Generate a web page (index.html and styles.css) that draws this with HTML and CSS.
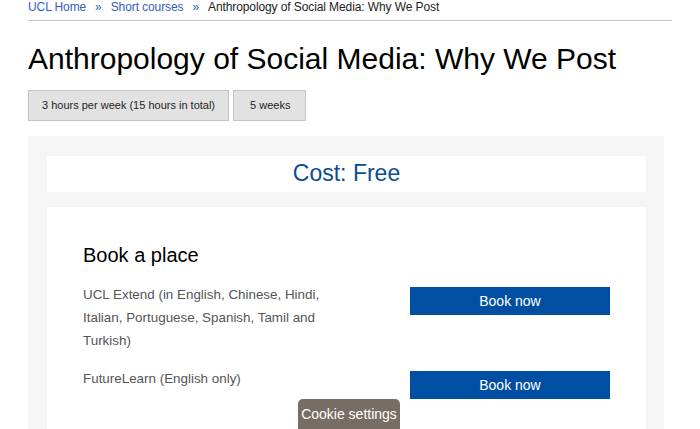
FILE: index.html
```html
<!DOCTYPE html>
<html lang="en">
<head>
<meta charset="utf-8">
<title>Anthropology of Social Media: Why We Post</title>
<link rel="stylesheet" href="styles.css">
</head>
<body>
<div class="page">
  <nav class="breadcrumb">
    <a href="#">UCL Home</a><span class="sep">»</span><a href="#">Short courses</a><span class="sep">»</span><span class="current">Anthropology of Social Media: Why We Post</span>
  </nav>
  <h1 class="title">Anthropology of Social Media: Why We Post</h1>
  <div class="tags">
    <span class="tag">3 hours per week (15 hours in total)</span>
    <span class="tag">5 weeks</span>
  </div>
  <section class="panel">
    <div class="cost">Cost: Free</div>
    <div class="card">
      <h2 class="card-title">Book a place</h2>
      <div class="row">
        <p class="row-text">UCL Extend (in English, Chinese, Hindi, Italian, Portuguese, Spanish, Tamil and Turkish)</p>
        <a class="btn" href="#">Book now</a>
      </div>
      <div class="row">
        <p class="row-text">FutureLearn (English only)</p>
        <a class="btn" href="#">Book now</a>
      </div>
    </div>
  </section>
</div>
<button class="cookie">Cookie settings</button>
</body>
</html>
```
FILE: styles.css
```css
html, body {
  margin: 0;
  padding: 0;
  background: #fff;
  font-family: "Liberation Sans", Arial, sans-serif;
  color: #000;
  overflow: hidden;
}
.page {
  padding: 0 28px;
}
.breadcrumb {
  font-size: 12px;
  line-height: 14px;
  padding-bottom: 6px;
  border-bottom: 1px solid #c8c8c8;
  color: #222;
  letter-spacing: -0.1px;
}
.breadcrumb a {
  color: #3460bd;
  text-decoration: none;
}
.breadcrumb .sep {
  color: #3460bd;
  margin: 0 9px;
  font-size: 12px;
}
.title {
  font-weight: normal;
  font-size: 30px;
  line-height: 36px;
  margin: 20px 0 13px;
}
.tags {
  display: flex;
  gap: 4px;
}
.tag {
  display: inline-block;
  font-size: 11px;
  line-height: 29px;
  padding: 0 13px;
  background: #e2e2e2;
  border: 1px solid #c4c4c4;
  color: #222;
}
.tag + .tag {
  padding: 0 15px 0 16px;
}
.panel {
  margin: 15px 8px 0 0;
  background: #f5f5f5;
  padding: 20px 18px 0 19px;
  height: 400px;
}
.cost {
  background: #fff;
  text-align: center;
  color: #0b4c94;
  font-size: 23px;
  line-height: 34px;
  padding-bottom: 2px;
  margin-bottom: 15px;
}
.card {
  background: #fff;
  padding: 33px 36px 20px 36px;
  height: 300px;
}
.card-title {
  font-weight: normal;
  font-size: 20px;
  line-height: 30px;
  margin: 0 0 13px;
}
.row {
  display: grid;
  grid-template-columns: 1fr 200px;
  column-gap: 64px;
  align-items: start;
  margin-bottom: 15px;
}
.row-text {
  margin: 0;
  font-size: 13.4px;
  line-height: 23px;
  color: #555;
}
.btn {
  display: block;
  margin-top: 4px;
  background: #004fa3;
  color: #fff;
  text-align: center;
  text-decoration: none;
  font-size: 14px;
  line-height: 28px;
  height: 28px;
}
.cookie {
  position: fixed;
  left: 298px;
  bottom: 0;
  width: 102px;
  height: 30px;
  border: none;
  border-radius: 5px 5px 0 0;
  background: #776d65;
  color: #fff;
  font-family: "Liberation Sans", Arial, sans-serif;
  font-size: 14px;
  padding: 0;
}
```
